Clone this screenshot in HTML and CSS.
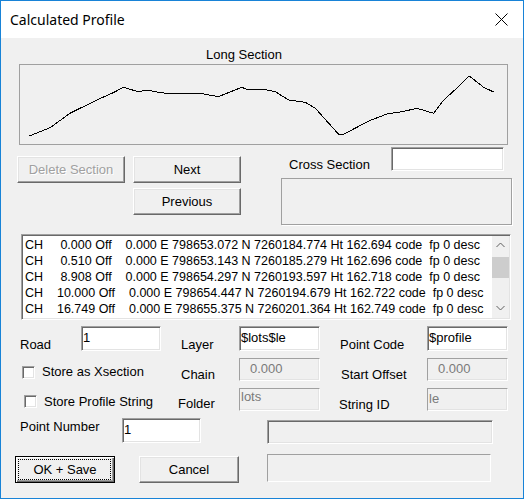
FILE: index.html
```html
<!DOCTYPE html>
<html>
<head>
<meta charset="utf-8">
<title>Calculated Profile</title>
<link rel="stylesheet" href="styles.css">
</head>
<body>
<div class="window">
  <div class="titlebar">
    <span class="title">Calculated Profile</span>
    <svg class="close" width="13" height="13" viewBox="0 0 13 13"><path d="M0.5 0.5L12.5 12.5M12.5 0.5L0.5 12.5" stroke="#000" stroke-width="1" fill="none"/></svg>
  </div>
  <div class="client">
    <div class="ls-label">Long Section</div>
    <div class="chart">
      <svg width="487" height="79" viewBox="20 65 487 79">
        <polyline fill="none" stroke="#000" stroke-width="1" shape-rendering="crispEdges" points="29.3,136 50,127.7 70,113.3 96.7,100 113.3,92.7 123.3,87.3 138.3,91.7 146.7,90 158.3,92.3 166.7,93.3 200,93.3 218.3,96.7 241.7,87.3 248.3,90 262,89 275.3,91.7 288.7,100 305.3,102.3 315.3,108.3 338.7,134.3 343.7,134.3 368.7,121 387,114 402,111.7 417,108.3 433.7,113.3 443.7,100 460.3,85 469.3,76 483.7,87.3 494.3,92.3"/>
      </svg>
    </div>
    <div class="nav">
      <div class="nav-buttons">
        <div class="btn disabled">Delete Section</div>
        <div class="btn">Next</div>
        <div class="btn btn-prev">Previous</div>
      </div>
      <div class="xsec">
        <div class="xsec-row">
          <span class="xsec-lbl">Cross Section</span>
          <div class="edit xsec-edit"></div>
        </div>
        <div class="xsec-box"></div>
      </div>
    </div>
    <div class="list">
      <div class="list-rows">
        <div class="row">CH     0.000 Off    0.000 E 798653.072 N 7260184.774 Ht 162.694 code  fp 0 desc</div>
        <div class="row">CH     0.510 Off    0.000 E 798653.143 N 7260185.279 Ht 162.696 code  fp 0 desc</div>
        <div class="row">CH     8.908 Off    0.000 E 798654.297 N 7260193.597 Ht 162.718 code  fp 0 desc</div>
        <div class="row">CH    10.000 Off    0.000 E 798654.447 N 7260194.679 Ht 162.722 code  fp 0 desc</div>
        <div class="row">CH    16.749 Off    0.000 E 798655.375 N 7260201.364 Ht 162.749 code  fp 0 desc</div>
      </div>
      <div class="scrollbar">
        <div class="sb-btn"><svg width="17" height="17" viewBox="0 0 17 17"><polyline points="4.5,11 8.5,7 12.5,11" fill="none" stroke="#606060" stroke-width="1"/></svg></div>
        <div class="sb-thumb"></div>
        <div class="sb-track"></div>
        <div class="sb-btn"><svg width="17" height="17" viewBox="0 0 17 17"><polyline points="4.5,5 8.5,9 12.5,5" fill="none" stroke="#606060" stroke-width="1"/></svg></div>
      </div>
    </div>
    <div class="form">
      <span class="lbl r1">Road</span>
      <div class="edit e1">1</div>
      <span class="lbl r1 c3">Layer</span>
      <div class="edit e1">$lots$le</div>
      <span class="lbl r1 c5">Point Code</span>
      <div class="edit e1">$profile</div>

      <div class="check chk-x"><span class="box"></span><span class="check-text">Store as Xsection</span></div>
      <span class="lbl r2 c3">Chain</span>
      <div class="edit dis num">0.000</div>
      <span class="lbl r2 c5 so">Start Offset</span>
      <div class="edit dis num">0.000</div>

      <div class="check chk-p"><span class="box"></span><span class="check-text">Store Profile String</span></div>
      <span class="lbl r3 c3 folder-lbl">Folder</span>
      <div class="edit dis folder">lots</div>
      <span class="lbl r3 c5 sid">String ID</span>
      <div class="edit dis">le</div>
    </div>
    <div class="row4">
      <span class="lbl pn-lbl">Point Number</span>
      <div class="edit pn-edit">1</div>
      <div class="sunken-box"></div>
    </div>
    <div class="row5">
      <div class="btn btn-default ok">OK + Save</div>
      <div class="btn cancel">Cancel</div>
      <div class="flat-box"></div>
    </div>
  </div>
</div>
</body>
</html>
```

FILE: styles.css
```css
* { box-sizing: border-box; }
body {
  margin: 0;
  font-family: "Liberation Sans", Arial, sans-serif;
  font-size: 13px;
  line-height: 15px;
  color: #000;
  background: #fff;
}
.window {
  width: 524px;
  height: 499px;
  border: 1px solid #1883d7;
  background: #f0f0f0;
  display: flex;
  flex-direction: column;
  overflow: hidden;
}
.titlebar {
  height: 37px;
  flex: none;
  background: #fff;
  display: flex;
  justify-content: space-between;
  align-items: flex-start;
}
.title {
  font-family: "Noto Sans", "Liberation Sans", sans-serif;
  font-size: 14px;
  line-height: 20px;
  margin: 9px 0 0 9px;
}
.close { margin: 12px 15px 0 0; display: block; }
.client {
  flex: 1;
  display: flex;
  flex-direction: column;
}
.ls-label { margin: 9px 0 0 205px; height: 15px; }
.chart {
  margin: 2px 0 0 18px;
  width: 489px;
  height: 81px;
  border: 1px solid #a0a0a0;
}
.chart svg { display: block; }

.btn {
  display: flex;
  align-items: center;
  justify-content: center;
  border: 1px solid;
  border-color: #fff #696969 #696969 #fff;
  box-shadow: inset -1px -1px #a0a0a0, inset 1px 1px #e3e3e3;
  background: #f0f0f0;
  position: relative;
  white-space: nowrap;
}
.btn.disabled { color: #a0a0a0; text-shadow: 1px 1px 0 #fff; }
.btn-default {
  border-color: #000;
  box-shadow: inset 1px 1px #fff, inset -1px -1px #696969, inset -2px -2px #a0a0a0;
}
.btn-default::after {
  content: "";
  position: absolute;
  left: 2px;
  top: 2px;
  right: 3px;
  bottom: 2px;
  border: 1px dotted #000;
  pointer-events: none;
}

.nav { display: flex; height: 80px; flex: none; }
.nav-buttons {
  display: grid;
  grid-template-columns: 108px 108px;
  grid-template-rows: 27px 27px;
  column-gap: 8px;
  row-gap: 5px;
  margin: 11px 0 0 16px;
  align-self: flex-start;
}
.btn-prev { grid-column: 2; }
.xsec { margin-left: 40px; display: flex; flex-direction: column; }
.xsec-row { margin-top: 2px; height: 24px; display: flex; align-items: flex-start; }
.xsec-lbl { width: 110px; padding-left: 8px; margin-top: 10px; white-space: nowrap; }
.xsec-edit { width: 113px; height: 24px; }
.xsec-box {
  margin-top: 7px;
  width: 231px;
  height: 47px;
  border: 1px solid #a0a0a0;
  box-shadow: 1px 1px 0 #fff;
}

.edit {
  border: 1px solid;
  border-color: #a0a0a0 #fff #fff #a0a0a0;
  box-shadow: inset 1px 1px #696969, inset -1px -1px #e3e3e3;
  background: #fff;
  padding: 3px 0 0 1px;
  white-space: nowrap;
}
.edit.dis {
  background: #f0f0f0;
  color: #7a7a7a;
  box-shadow: inset -1px -1px #e3e3e3;
  padding-top: 2px;
}
.edit.num { padding-left: 10px; }
.edit.folder { padding-top: 0; }

.list {
  margin: 9px 0 0 20px;
  width: 490px;
  height: 86px;
  border: 1px solid;
  border-color: #a0a0a0 #fff #fff #a0a0a0;
  box-shadow: inset 1px 1px #696969, inset -1px -1px #e3e3e3;
  padding: 1px;
  background: #fff;
  display: flex;
  flex: none;
}
.list-rows {
  flex: 1;
  min-width: 0;
  overflow: hidden;
  padding: 1px 0 0 2px;
  font-size: 12.5px;
  line-height: 16px;
}
.row { white-space: pre; height: 16px; }
.scrollbar {
  width: 17px;
  flex: none;
  background: #f0f0f0;
  display: flex;
  flex-direction: column;
}
.sb-btn { height: 17px; flex: none; }
.sb-btn svg { display: block; }
.sb-thumb { margin-top: 4px; height: 21px; background: #cdcdcd; flex: none; }
.sb-track { flex: 1; }

.form {
  margin: 6px 0 0 19px;
  display: grid;
  grid-template-columns: 61px 80px 78px 81px 107px 81px;
  grid-template-rows: 32px 30px 30px;
  align-items: start;
  flex: none;
}
.lbl { white-space: nowrap; }
.r1 { margin-top: 11px; }
.r2 { margin-top: 9px; }
.r3 { margin-top: 9px; }
.c3 { padding-left: 20px; }
.c5 { padding-left: 20px; }
.so { padding-left: 21px; }
.folder-lbl { padding-left: 17px; margin-top: 8px; }
.sid { padding-left: 19px; }
.e1 { height: 25px; }
.edit.dis { height: 23px; }

.check { grid-column: span 2; display: flex; align-items: flex-start; }
.chk-x { margin-left: 2px; }
.chk-x .box { margin-top: 8px; }
.chk-p { margin-left: 4px; }
.chk-p .box { margin-top: 7px; }
.box {
  width: 13px;
  height: 13px;
  flex: none;
  border: 1px solid;
  border-color: #a0a0a0 #fff #fff #a0a0a0;
  box-shadow: inset 1px 1px #696969, inset -1px -1px #e3e3e3;
  background: #fff;
}
.check-text { margin: 6px 0 0 7px; white-space: nowrap; }

.row4 { display: flex; align-items: flex-start; height: 36px; flex: none; }
.pn-lbl { margin: 1px 0 0 19px; width: 102px; }
.pn-edit { width: 79px; height: 25px; }
.sunken-box {
  margin: 2px 0 0 66px;
  width: 226px;
  height: 24px;
  border: 1px solid;
  border-color: #a0a0a0 #fff #fff #a0a0a0;
  box-shadow: inset 1px 1px #696969, inset -1px -1px #e3e3e3;
  background: #f0f0f0;
}
.row5 { display: flex; align-items: flex-start; height: 30px; flex: none; }
.ok { margin: 2px 0 0 14px; width: 100px; height: 27px; }
.cancel { margin: 2px 0 0 24px; width: 100px; height: 27px; }
.flat-box {
  margin-left: 28px;
  width: 224px;
  height: 28px;
  border: 1px solid;
  border-color: #a0a0a0 #fff #fff #a0a0a0;
  background: #f0f0f0;
}
```
